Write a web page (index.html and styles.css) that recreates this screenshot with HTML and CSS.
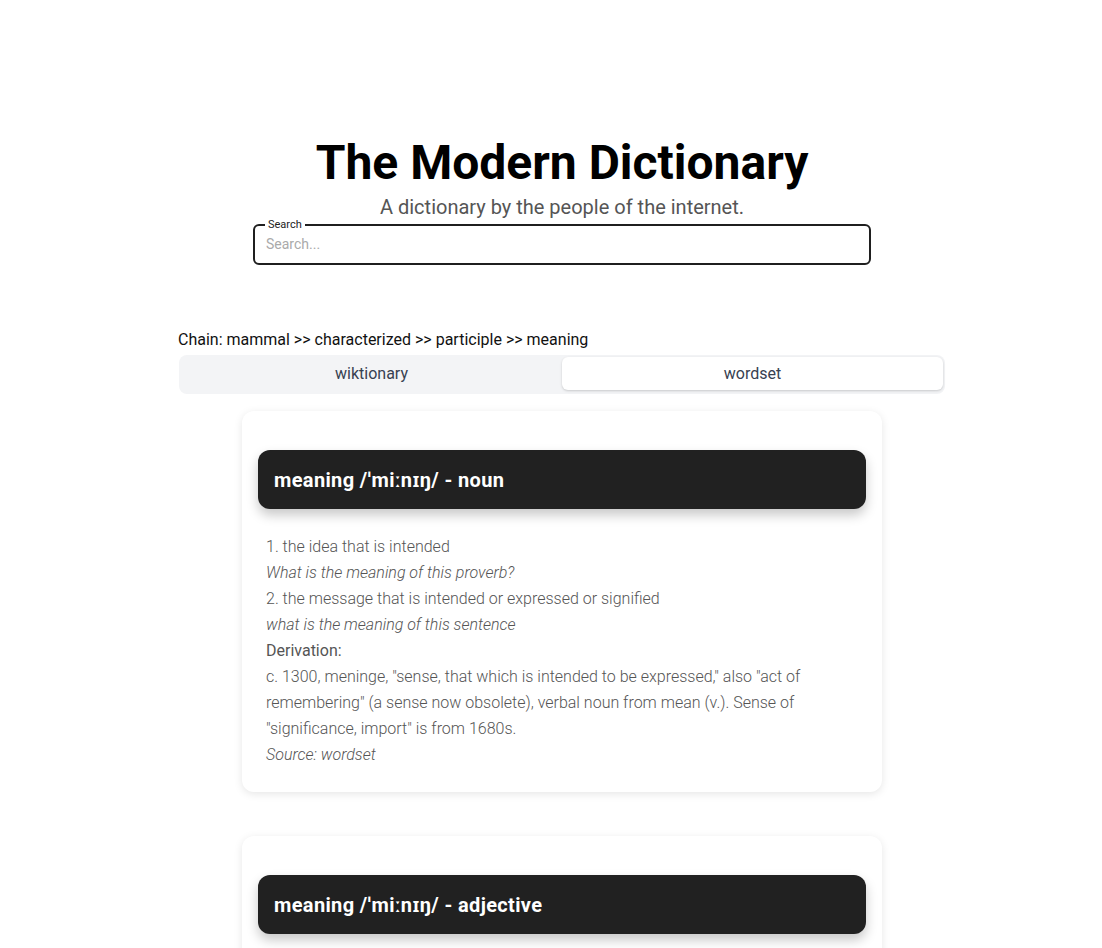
FILE: index.html
```html
<!DOCTYPE html>
<html lang="en">
<head>
<meta charset="utf-8">
<title>The Modern Dictionary</title>
<link rel="stylesheet" href="styles.css">
</head>
<body>
<div class="page">
  <header class="hero">
    <h1 class="title">The Modern Dictionary</h1>
    <p class="subtitle">A dictionary by the people of the internet.</p>
    <fieldset class="search">
      <legend class="search-label">Search</legend>
      <input class="search-input" type="text" placeholder="Search...">
    </fieldset>
  </header>

  <main class="content">
    <div class="chain">Chain: mammal &gt;&gt; characterized &gt;&gt; participle &gt;&gt; meaning</div>
    <div class="tabs">
      <div class="tab">wiktionary</div>
      <div class="tab tab-active">wordset</div>
    </div>

    <section class="cards">
      <article class="card">
        <div class="card-head">meaning /ˈmiːnɪŋ/ - noun</div>
        <div class="card-body">
          <p>1. the idea that is intended</p>
          <p class="ex">What is the meaning of this proverb?</p>
          <p>2. the message that is intended or expressed or signified</p>
          <p class="ex">what is the meaning of this sentence</p>
          <p class="deriv">Derivation:</p>
          <p>c. 1300, meninge, "sense, that which is intended to be expressed," also "act of remembering" (a sense now obsolete), verbal noun from mean (v.). Sense of "significance, import" is from 1680s.</p>
          <p class="ex">Source: wordset</p>
        </div>
      </article>

      <article class="card">
        <div class="card-head">meaning /ˈmiːnɪŋ/ - adjective</div>
        <div class="card-body">
          <p>1. rich in significance or implication</p>
          <p class="ex">a meaning look</p>
          <p class="ex">Source: wordset</p>
        </div>
      </article>
    </section>
  </main>
</div>
</body>
</html>
```

FILE: styles.css
```css
html, body {
  margin: 0;
  padding: 0;
  background: #fff;
}

body {
  font-family: Roboto, "Noto Sans", "DejaVu Sans", sans-serif;
  color: #000;
}

.page {
  padding-left: 22px;
}

.hero {
  display: flex;
  flex-direction: column;
  align-items: center;
  padding-top: 134px;
}

.title {
  margin: 0;
  font-size: 48px;
  line-height: 58px;
  font-weight: 700;
  color: #000;
}

.subtitle {
  margin: 0;
  font-size: 20px;
  line-height: 30px;
  font-weight: 400;
  color: #555;
}

.search {
  width: 618px;
  box-sizing: border-box;
  margin: -3px 0 0;
  padding: 0 12px 0 11px;
  border: 2px solid #1f1f1f;
  border-radius: 6px;
  height: 46px;
}

.search-label {
  font-size: 11px;
  line-height: 11px;
  padding: 0 3px;
  margin-left: -1px;
  color: #222;
}

.search-input {
  display: block;
  width: 100%;
  border: 0;
  outline: 0;
  padding: 4px 0 0;
  margin: 0;
  font-family: Roboto, sans-serif;
  font-size: 14px;
  line-height: 20px;
  color: #222;
  background: transparent;
}

.search-input::placeholder {
  color: #aaa;
}

.content {
  width: 766px;
  margin: 0 auto;
  padding-top: 65px;
}

.chain {
  font-size: 16px;
  line-height: 20px;
  color: #111;
  margin-left: -1px;
}

.tabs {
  display: flex;
  margin-top: 5px;
  padding: 2px 2px 4px;
  background: #f3f4f6;
  border-radius: 8px;
}

.tab {
  flex: 1;
  height: 33px;
  display: flex;
  align-items: center;
  justify-content: center;
  font-size: 16px;
  color: #374151;
  border-radius: 6px;
}

.tab-active {
  background: #fff;
  box-shadow: 0 1px 3px rgba(0, 0, 0, 0.12), 0 1px 2px rgba(0, 0, 0, 0.06);
}

.cards {
  display: flex;
  flex-direction: column;
  align-items: center;
  gap: 44px;
  padding-top: 17px;
}

.card {
  width: 640px;
  box-sizing: border-box;
  padding: 39px 16px 24px;
  border-radius: 12px;
  background: #fff;
  box-shadow: 0 2px 8px rgba(0, 0, 0, 0.1);
}

.card-head {
  height: 59px;
  display: flex;
  align-items: center;
  padding: 0 16px;
  border-radius: 12px;
  background: #212121;
  color: #fff;
  font-size: 20px;
  font-weight: 700;
  letter-spacing: 0.35px;
  box-shadow: 0 6px 12px rgba(0, 0, 0, 0.22);
}

.card-body {
  padding: 25px 8px 0;
}

.card-body p {
  margin: 0;
  font-size: 16px;
  line-height: 26px;
  font-weight: 300;
  color: #555;
}

.card-body .ex {
  font-style: italic;
}

.card-body .deriv {
  font-weight: 400;
  color: #555;
}
```
